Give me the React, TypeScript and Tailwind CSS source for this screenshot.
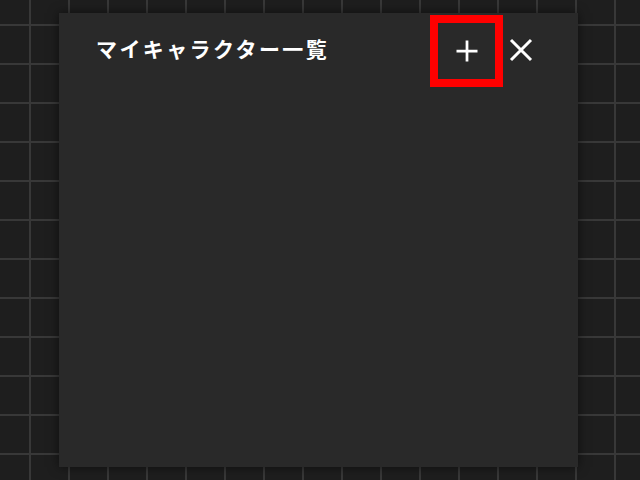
import React from 'react';

// Outline "+" drawn to match the thin white cross in the reference.
function PlusIcon() {
  return (
    <svg width="24" height="24" viewBox="0 0 24 24" fill="none" stroke="white" strokeWidth="2.75">
      <path d="M12 1.5v21M1.5 12h21" />
    </svg>
  );
}

function CloseIcon() {
  return (
    <svg width="26" height="26" viewBox="0 0 26 26" fill="none" stroke="white" strokeWidth="3">
      <path d="M3 3l20 20M23 3L3 23" />
    </svg>
  );
}

export default function App() {
  return (
    <div
      className="w-[640px] h-[480px] overflow-hidden bg-[#1e1e1e] bg-[linear-gradient(to_right,#383838_2px,transparent_2px),linear-gradient(to_bottom,#383838_2px,transparent_2px)] bg-size-[39px_39px] bg-position-[29px_24px] pt-[13px] pl-[59px]"
      style={{ fontFamily: '"Noto Sans CJK JP", "Noto Sans", sans-serif' }}
    >
      <section className="w-[519px] h-[454px] bg-[#292929] shadow-[0_0_10px_rgba(0,0,0,0.55)]">
        <header className="flex items-center h-[74px] pl-[37px] pr-[44px]">
          <h2 className="flex-1 text-white text-[21px] font-bold tracking-[2.4px] leading-none mb-[3px]">
            マイキャラクター一覧
          </h2>
          <button className="w-[73px] h-[72px] border-[8px] border-[#ff0000] flex items-center justify-center mt-[1px]">
            <PlusIcon />
          </button>
          <button className="ml-[5px] flex items-center justify-center">
            <CloseIcon />
          </button>
        </header>
      </section>
    </div>
  );
}
